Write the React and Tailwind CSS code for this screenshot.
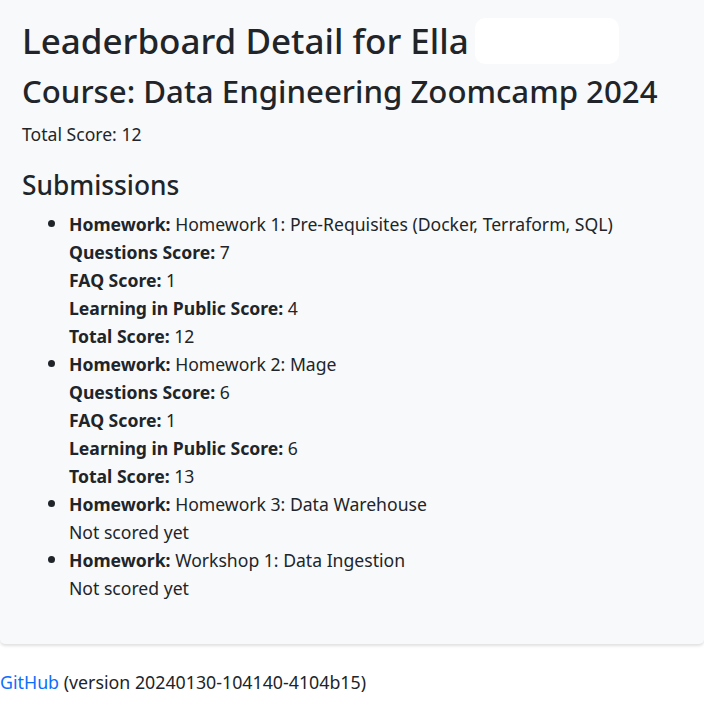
import * as React from "react"

const submissions = [
    {
        homework: "Homework 1: Pre-Requisites (Docker, Terraform, SQL)",
        scores: { questions: 7, faq: 1, lip: 4, total: 12 },
    },
    {
        homework: "Homework 2: Mage",
        scores: { questions: 6, faq: 1, lip: 6, total: 13 },
    },
    { homework: "Homework 3: Data Warehouse", scores: null },
    { homework: "Workshop 1: Data Ingestion", scores: null },
]

function Submission({ homework, scores }) {
    return (
        <li className="list-disc marker:text-[20px]">
            <div><b className="font-bold">Homework:</b> {homework}</div>
            {scores ? (
                <>
                    <div><b className="font-bold">Questions Score:</b> {scores.questions}</div>
                    <div><b className="font-bold">FAQ Score:</b> {scores.faq}</div>
                    <div><b className="font-bold">Learning in Public Score:</b> {scores.lip}</div>
                    <div><b className="font-bold">Total Score:</b> {scores.total}</div>
                </>
            ) : (
                <div>Not scored yet</div>
            )}
        </li>
    )
}

export default function App() {
    return (
        <div className="min-h-[705px] bg-white text-[#212529] font-['Noto_Sans','Liberation_Sans',sans-serif] text-[17.6px] leading-[28px]">
            <div className="bg-[#f8f9fa] rounded-b-[5px] shadow-[0_2px_3px_rgba(0,0,0,0.12)] px-[22px] pt-[18px] pb-[42px]">
                <h1 className="text-[35px] leading-[44px] font-medium flex items-center">
                    Leaderboard Detail for Ella
                    <span className="ml-[6px] inline-block w-[144px] h-[46px] bg-white rounded-[10px]" />
                </h1>
                <h2 className="mt-[7px] text-[31.2px] leading-[40px] font-medium">Course: Data Engineering Zoomcamp 2024</h2>
                <p className="mt-[11px] text-[17.6px] leading-[24px]">Total Score: 12</p>
                <h3 className="mt-[22px] text-[26.3px] leading-[34px] font-medium">Submissions</h3>
                <ul className="mt-[8px] pl-[47px]">
                    {submissions.map((s) => (
                        <Submission key={s.homework} {...s} />
                    ))}
                </ul>
            </div>
            <div className="pt-[24px] text-[17.8px] leading-[28px]">
                <a href="#" className="text-[#0d6efd]">GitHub</a> (version 20240130-104140-4104b15)
            </div>
        </div>
    )
}
